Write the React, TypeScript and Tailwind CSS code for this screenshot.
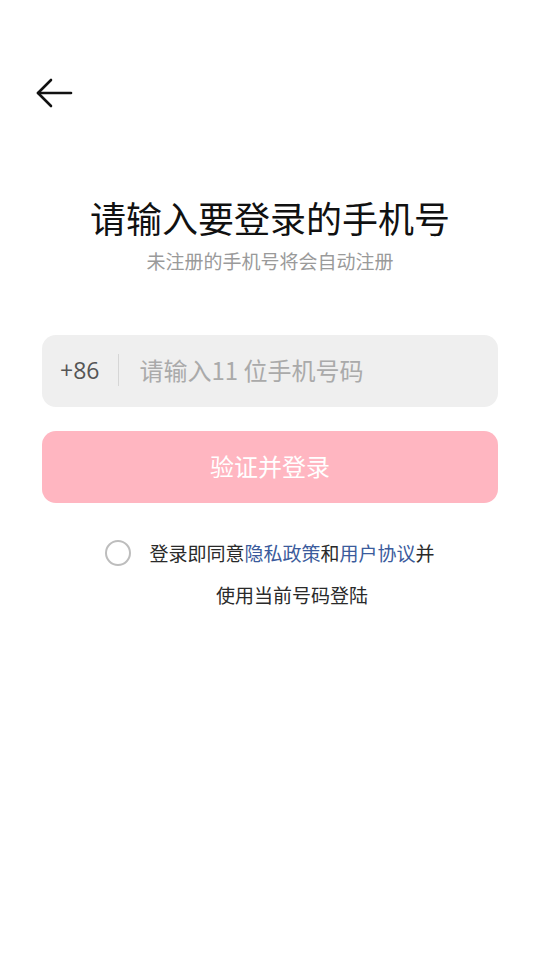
export default function App() {
  return (
    <div
      className="w-[540px] h-[960px] bg-white flex flex-col"
      style={{ fontFamily: '"Noto Sans CJK SC", "Noto Sans", sans-serif' }}
    >
      <div className="pt-[78px] pl-[35px]">
        <svg width="38" height="30" viewBox="0 0 38 30" fill="none" stroke="#111" strokeWidth="2.6" strokeLinecap="round" strokeLinejoin="round">
          <path d="M3 15 H36" />
          <path d="M16 2 L3 15 L16 28" />
        </svg>
      </div>

      <div className="mt-[87px] flex flex-col items-center">
        <h1 className="text-[36px] leading-[44px] text-[#111] font-normal">请输入要登录的手机号</h1>
        <p className="mt-[9px] text-[19px] leading-[26px] text-[#9a9a9a]">未注册的手机号将会自动注册</p>
      </div>

      <div className="mt-[61px] mx-[42px] h-[72px] rounded-[14px] bg-[#efefef] flex items-center pl-[18px] pb-[2px]">
        <span className="text-[23px] text-[#555]" style={{ fontFamily: '"Open Sans", "Noto Sans CJK SC", sans-serif' }}>+86</span>
        <span className="ml-[19px] w-px h-[32px] bg-[#d6d6d6]" />
        <span className="ml-[20px] text-[24px] text-[#aaa]">请输入11 位手机号码</span>
      </div>

      <button className="mt-[24px] mx-[42px] h-[72px] rounded-[14px] bg-[#ffb6c1] text-white text-[24px] flex items-center justify-center pb-[3px]">
        验证并登录
      </button>

      <div className="mt-[29px] flex justify-center">
        <span className="mt-[8px] w-[26px] h-[26px] rounded-full border-2 border-[#bdbdbd] shrink-0" />
        <p className="ml-[18px] w-[286px] text-center text-[19px] leading-[42px] text-[#2a2a2a]">
          登录即同意<span className="text-[#3b5b9c]">隐私政策</span>和<span className="text-[#3b5b9c]">用户协议</span>并
          <br />
          使用当前号码登陆
        </p>
      </div>
    </div>
  )
}
